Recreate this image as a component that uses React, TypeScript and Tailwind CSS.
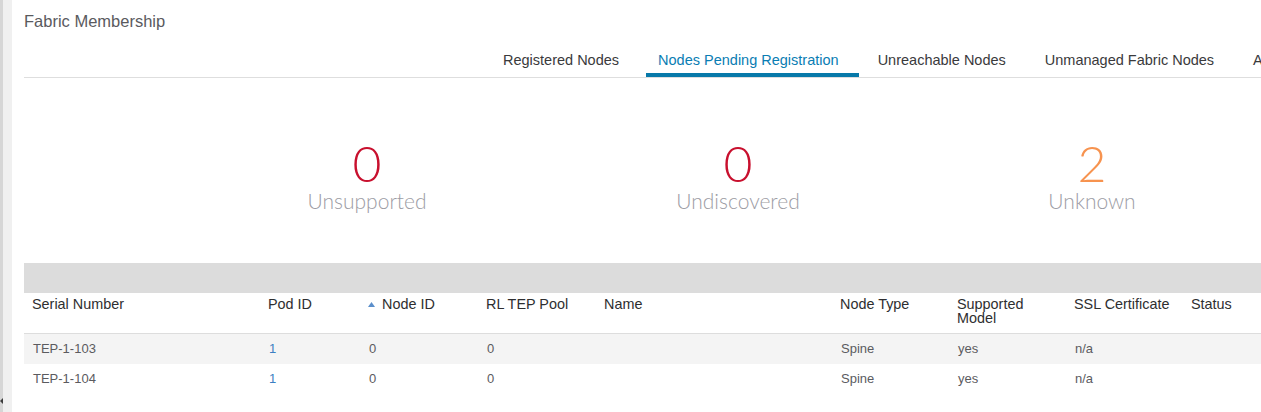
const tabs = [
  { label: 'Registered Nodes', active: false },
  { label: 'Nodes Pending Registration', active: true },
  { label: 'Unreachable Nodes', active: false },
  { label: 'Unmanaged Fabric Nodes', active: false },
  { label: 'Available Spine Switches', active: false },
]

const rows = [
  { serial: 'TEP-1-103', pod: '1', node: '0', pool: '0', name: '', type: 'Spine', supported: 'yes', ssl: 'n/a', status: '' },
  { serial: 'TEP-1-104', pod: '1', node: '0', pool: '0', name: '', type: 'Spine', supported: 'yes', ssl: 'n/a', status: '' },
]

const cols = 'grid grid-cols-[236px_100px_118px_118px_236px_117px_117px_117px_1fr]'

function SortUp() {
  return (
    <svg width="7" height="5" viewBox="0 0 7 5" className="mt-[5px] mr-[7px] shrink-0">
      <polygon points="3.5,0 7,5 0,5" fill="#5b8fcb" />
    </svg>
  )
}

export default function App() {
  return (
    <div className="w-[1261px] h-[412px] overflow-hidden flex bg-white font-['Liberation_Sans',Arial,sans-serif]">
      {/* collapsed side nav */}
      <div className="flex shrink-0">
        <div className="w-[3px] bg-[#d6d6d6] flex flex-col">
          <svg width="3" height="6" viewBox="0 0 3 6" className="mt-auto mb-[8px]">
            <polygon points="3,0 3,6 0,3" fill="#3c3c3c" />
          </svg>
        </div>
        <div className="w-[9px] bg-[#f0f0f0]" />
      </div>

      <div className="flex-1 min-w-0 pl-[12px] overflow-hidden">
        <h1 className="pt-[11px] text-[16.5px] leading-[20px] text-[#5a5a5e]">Fabric Membership</h1>

        {/* tabs */}
        <div className="mt-[19px] flex gap-[7px] ml-[467px] whitespace-nowrap">
          {tabs.map((t) => (
            <div
              key={t.label}
              className={
                t.active
                  ? 'pl-3 pr-5 pb-[3px] border-b-4 border-[#0779a9] text-[14.5px] leading-[20px] text-[#0a7db3]'
                  : 'pl-3 pr-5 pb-[3px] border-b-4 border-transparent text-[14.5px] leading-[20px] text-[#3a3a3c]'
              }
            >
              {t.label}
            </div>
          ))}
        </div>
        <div className="h-px bg-[#dedede]" />

        {/* summary counts */}
        <div className="mt-[60px] flex font-['Lato',sans-serif] font-light">
          <div className="ml-[243px] w-[200px] text-center">
            <div className="text-[50px] leading-none text-[#c8102e]">0</div>
            <div className="mt-px text-[21px] leading-[24px] text-[#9c9ca4]">Unsupported</div>
          </div>
          <div className="ml-[171px] w-[200px] text-center">
            <div className="text-[50px] leading-none text-[#c8102e]">0</div>
            <div className="mt-px text-[21px] leading-[24px] text-[#9c9ca4]">Undiscovered</div>
          </div>
          <div className="ml-[154px] w-[200px] text-center">
            <div className="text-[50px] leading-none text-[#f7934f]">2</div>
            <div className="mt-px text-[21px] leading-[24px] text-[#9c9ca4]">Unknown</div>
          </div>
        </div>

        {/* table */}
        <div className="mt-[50px]">
          <div className="h-[30px] bg-[#dcdcdc]" />
          <div className={`${cols} h-[41px] border-b border-[#dddddd] text-[14.4px] leading-[14px] text-[#2e2e30]`}>
            <div className="px-2 pt-[4px]">Serial Number</div>
            <div className="px-2 pt-[4px]">Pod ID</div>
            <div className="px-2 pt-[4px] flex items-start">
              <SortUp />
              <span>Node ID</span>
            </div>
            <div className="px-2 pt-[4px]">RL TEP Pool</div>
            <div className="px-2 pt-[4px]">Name</div>
            <div className="px-2 pt-[4px]">Node Type</div>
            <div className="px-2 pt-[4px]">Supported Model</div>
            <div className="px-2 pt-[4px] whitespace-nowrap">SSL Certificate</div>
            <div className="px-2 pt-[4px]">Status</div>
          </div>
          {rows.map((r, i) => (
            <div
              key={r.serial}
              className={`${cols} h-[30px] text-[13px] text-[#5b5b5f] ${i % 2 === 0 ? 'bg-[#f4f4f4]' : 'bg-white'}`}
            >
              <div className="px-[9px] flex items-center">{r.serial}</div>
              <div className="px-[9px] flex items-center text-[#3b7fc2]">{r.pod}</div>
              <div className="px-[9px] flex items-center">{r.node}</div>
              <div className="px-[9px] flex items-center">{r.pool}</div>
              <div className="px-[9px] flex items-center">{r.name}</div>
              <div className="px-[9px] flex items-center">{r.type}</div>
              <div className="px-[9px] flex items-center">{r.supported}</div>
              <div className="px-[9px] flex items-center">{r.ssl}</div>
              <div className="px-[9px] flex items-center">{r.status}</div>
            </div>
          ))}
        </div>
      </div>
    </div>
  )
}
